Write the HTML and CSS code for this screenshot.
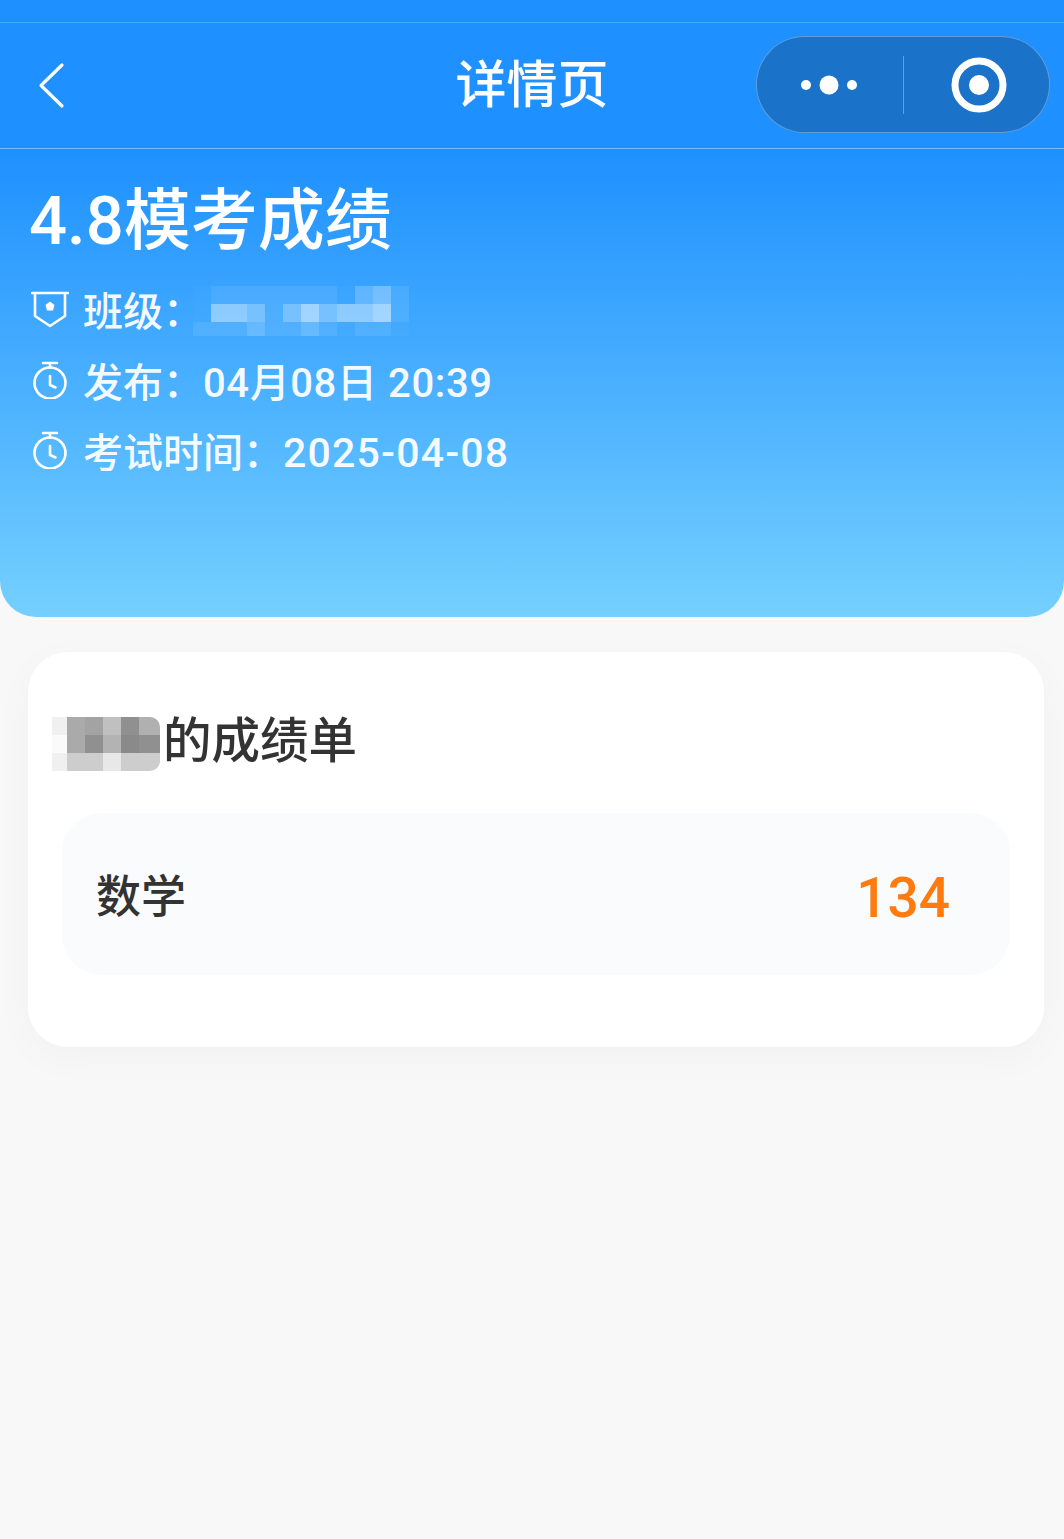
FILE: index.html
```html
<!DOCTYPE html>
<html lang="zh-CN">
<head>
<meta charset="utf-8">
<title>详情页</title>
<link rel="stylesheet" href="styles.css">
</head>
<body>
<div class="page">
  <header class="top">
    <div class="status"></div>
    <nav class="nav">
      <svg class="back" viewBox="0 0 30 48" aria-hidden="true"><path d="M26 4 L5 24.5 L26 45"/></svg>
      <h1 class="nav-title">详情页</h1>
      <div class="capsule">
        <svg class="cap-more" viewBox="0 0 60 24" aria-hidden="true">
          <circle cx="6" cy="12" r="5"/><circle cx="29" cy="12" r="9.5"/><circle cx="52" cy="12" r="5"/>
        </svg>
        <span class="cap-div"></span>
        <svg class="cap-target" viewBox="0 0 56 56" aria-hidden="true">
          <circle class="ring" cx="28" cy="28" r="24"/><circle cx="28" cy="28" r="10"/>
        </svg>
      </div>
    </nav>
  </header>
  <section class="hero">
    <h2 class="hero-title">4.8模考成绩</h2>
    <div class="meta">
      <svg class="meta-icon" viewBox="0 0 38 38" aria-hidden="true">
        <path d="M1 3 H37 M4 3 V26 L19 36 L34 26 V3"/>
        <path class="fill" d="M19 11.5 L23.5 15 L22 20.5 H16 L14.5 15 Z"/>
      </svg>
      <span class="label">班级：</span>
      <div class="mosaic mosaic-blue" aria-hidden="true">
        <i class="b0"></i><i class="b1"></i><i class="b1"></i><i class="b1"></i><i class="b1"></i><i class="b1"></i><i class="b1"></i><i class="b1"></i><i class="b0"></i><i class="b2"></i><i class="b3"></i><i class="b1"></i>
        <i class="b0"></i><i class="b4"></i><i class="b4"></i><i class="b3"></i><i class="b1"></i><i class="b3"></i><i class="b5"></i><i class="b3"></i><i class="b4"></i><i class="b4"></i><i class="b5"></i><i class="b1"></i>
        <i class="b1"></i><i class="b1"></i><i class="b1"></i><i class="b2"></i><i class="b1"></i><i class="b1"></i><i class="b2"></i><i class="b1"></i><i class="b0"></i><i class="b1"></i><i class="b1"></i><i class="b0"></i>
      </div>
    </div>
    <div class="meta">
      <svg class="meta-icon" viewBox="0 0 38 38" aria-hidden="true">
        <circle cx="19" cy="22" r="15.5"/><path d="M12 2 H26 M19 2 V6.5 M19 15 V24 L24.5 26.5"/>
      </svg>
      <span class="label">发布：<span class="value-date">04月08日 20:39</span></span>
    </div>
    <div class="meta">
      <svg class="meta-icon" viewBox="0 0 38 38" aria-hidden="true">
        <circle cx="19" cy="22" r="15.5"/><path d="M12 2 H26 M19 2 V6.5 M19 15 V24 L24.5 26.5"/>
      </svg>
      <span class="label">考试时间：<span class="value-exam">2025-04-08</span></span>
    </div>
  </section>
  <main class="card">
    <div class="card-head">
      <div class="mosaic mosaic-grey" aria-hidden="true">
        <i class="g0"></i><i class="g3"></i><i class="g31"></i><i class="g2"></i><i class="g4"></i><i class="g32"></i>
        <i class="g00"></i><i class="g3"></i><i class="g4"></i><i class="g21"></i><i class="g41"></i><i class="g4"></i>
        <i class="g0"></i><i class="g1"></i><i class="g1"></i><i class="g01"></i><i class="g1"></i><i class="g1"></i>
      </div>
      <h3 class="card-title">的成绩单</h3>
    </div>
    <div class="score-row">
      <span class="subject">数学</span>
      <span class="score">134</span>
    </div>
  </main>
</div>
</body>
</html>
```

FILE: styles.css
```css
* { box-sizing: border-box; }
html, body { margin: 0; padding: 0; }
body {
  background: #f8f8f8;
  font-family: Roboto, "Noto Sans CJK SC", "Noto Sans", sans-serif;
  color: #333;
}
.page { min-height: 1539px; }
h1, h2, h3 { margin: 0; font-weight: 400; }

.top { background: #1e90ff; }
.status { height: 23px; border-bottom: 1px solid rgba(255,255,255,.18); }
.nav {
  height: 126px;
  border-bottom: 1px solid rgba(255,255,255,.4);
  display: grid;
  grid-template-columns: 1fr auto 1fr;
  align-items: center;
  padding: 0 14px 2px 36px;
}
.back { width: 30px; height: 48px; fill: none; stroke: #fff; stroke-width: 3.2; stroke-linecap: round; stroke-linejoin: round; }
.nav-title { font-size: 51px; line-height: 60px; color: #fff; text-align: center; padding: 2px 22px 0 0; white-space: nowrap; font-weight: 500; }
.capsule {
  justify-self: end;
  width: 294px;
  height: 97px;
  border-radius: 49px;
  background: #1a72c9;
  border: 1px solid rgba(255,255,255,.3);
  display: flex;
  align-items: center;
  padding-left: 43px;
}
.cap-more { width: 60px; height: 24px; fill: #fff; }
.cap-div { width: 1px; height: 58px; background: rgba(255,255,255,.32); margin-left: 43px; }
.cap-target { width: 56px; height: 56px; margin-left: 47px; fill: #fff; }
.cap-target .ring { fill: none; stroke: #fff; stroke-width: 7; }

.hero {
  height: 468px;
  background: linear-gradient(180deg, #1e90ff 0%, #75d0ff 100%);
  border-radius: 0 0 36px 36px;
  padding: 31px 30px 0;
  color: #fff;
}
.hero-title { font-size: 67px; line-height: 82px; font-weight: 500; margin: 0 0 12px -1px; white-space: nowrap; }
.meta { height: 70.5px; display: flex; align-items: center; font-size: 40px; color: rgba(255,255,255,.95); white-space: nowrap; padding-left: 1px; }
.meta-icon { width: 38px; height: 38px; margin-right: 14px; flex: none; fill: none; stroke: #fff; stroke-width: 2.6; stroke-linecap: round; stroke-linejoin: round; }
.meta-icon .fill { fill: #fff; stroke: none; }
.label { display: inline-block; font-weight: 500; }
.value-date { letter-spacing: .6px; }
.value-exam { font-size: 41px; letter-spacing: 1.2px; }

.mosaic { display: grid; flex: none; }
.mosaic i { display: block; }
.mosaic-blue { grid-template-columns: repeat(12, 18px); grid-template-rows: 18px 18px 14px; margin-left: -10px; margin-top: 4px; }
.b0 { background: rgba(255,255,255,.02); }
.b1 { background: rgba(255,255,255,.09); }
.b2 { background: rgba(255,255,255,.2); }
.b3 { background: rgba(255,255,255,.3); }
.b4 { background: rgba(255,255,255,.42); }
.b5 { background: rgba(255,255,255,.52); }

.card {
  margin: 35px 20px 0 28px;
  height: 395px;
  background: #fff;
  border-radius: 40px;
  box-shadow: 0 10px 40px rgba(0,0,0,.03);
  padding: 65px 34px 0;
}
.card-head { display: flex; align-items: center; height: 54px; }
.mosaic-grey { grid-template-columns: 15px repeat(4, 18px) 21px; grid-template-rows: repeat(3, 18px); margin-left: -10px; margin-right: 3px; border-radius: 0 10px 10px 0; overflow: hidden; }
.g0 { background: #f0f0f0; }
.g00 { background: #fafafa; }
.g01 { background: #e8e8e8; }
.g1 { background: #cdcdcd; }
.g2 { background: #c0c0c0; }
.g21 { background: #b3b3b3; }
.g3 { background: #aaaaaa; }
.g31 { background: #a3a3a3; }
.g32 { background: #b0b0b0; }
.g4 { background: #909090; }
.g41 { background: #8a8a8a; }
.card-title { font-size: 48.5px; line-height: 54px; color: #333; font-weight: 500; white-space: nowrap; padding-bottom: 4px; }
.score-row {
  margin-top: 42px;
  height: 162px;
  background: #f9fbfc;
  border-radius: 40px;
  display: flex;
  justify-content: space-between;
  align-items: center;
  padding: 0 60px 0 34px;
}
.subject { font-size: 45px; color: #333; font-weight: 500; padding-bottom: 2px; }
.score { font-size: 55px; color: #ff7a0f; font-weight: 500; padding-top: 7px; }
```
